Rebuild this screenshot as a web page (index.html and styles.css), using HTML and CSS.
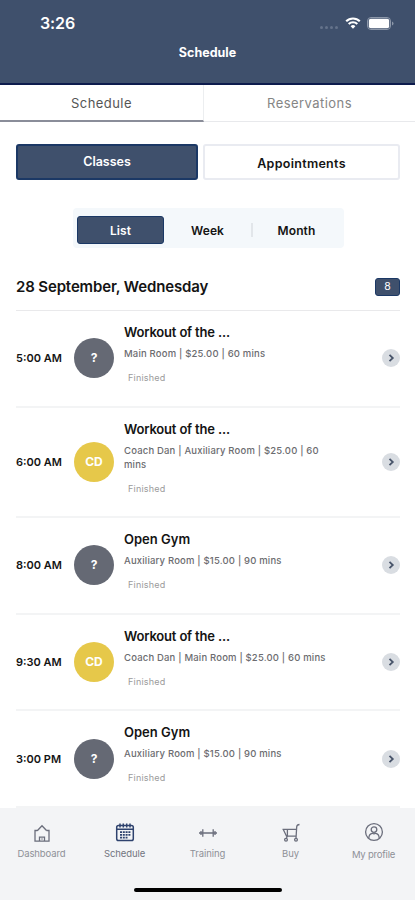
FILE: index.html
```html
<!DOCTYPE html>
<html lang="en">
<head>
<meta charset="utf-8">
<title>Schedule</title>
<link rel="stylesheet" href="styles.css">
</head>
<body>
<div class="app">
  <header class="header">
    <div class="status">
      <span class="clock">3:26</span>
      <div class="signals">
        <span class="dots"><i></i><i></i><i></i><i></i></span>
        <svg class="wifi" viewBox="0 0 16 12"><path d="M1.2 4.3a9.6 9.6 0 0 1 13.6 0M3.7 7a6.1 6.1 0 0 1 8.6 0" fill="none" stroke="#fff" stroke-width="2.1"/><path d="M5.6 9.2a3.4 3.4 0 0 1 4.8 0L8 11.8z" fill="#fff"/></svg>
        <svg class="battery" viewBox="0 0 27 13"><rect x=".5" y=".5" width="23" height="12" rx="3.5" fill="none" stroke="#8c97a9"/><rect x="1.8" y="1.8" width="20.4" height="9.4" rx="2" fill="#fff"/><path d="M25 4.5q1.5.6 1.5 2t-1.5 2z" fill="#8c97a9"/></svg>
      </div>
    </div>
    <h1 class="title">Schedule</h1>
  </header>
  <nav class="tabs">
    <span class="tab tab-on">Schedule</span>
    <span class="tab">Reservations</span>
  </nav>
  <main class="content">
    <div class="kinds">
      <button class="kind kind-on">Classes</button>
      <button class="kind">Appointments</button>
    </div>
    <div class="views">
      <button class="view view-on">List</button>
      <button class="view">Week</button>
      <i class="split"></i>
      <button class="view">Month</button>
    </div>
    <div class="day"><h2>28 September, Wednesday</h2><span class="count">8</span></div>
    <ul class="list">
      <li class="row">
        <span class="time">5:00 AM</span><span class="avatar">?</span>
        <div class="info"><h3>Workout of the ...</h3><p class="meta">Main Room | $25.00 | 60 mins</p><p class="state">Finished</p></div>
        <svg class="go" viewBox="0 0 18 18"><circle cx="9" cy="9" r="9"/><path d="M7.5 5.8 10.8 9l-3.3 3.2"/></svg>
      </li>
      <li class="row row-tall">
        <span class="time">6:00 AM</span><span class="avatar coach">CD</span>
        <div class="info"><h3>Workout of the ...</h3><p class="meta">Coach Dan | Auxiliary Room | $25.00 | 60<br>mins</p><p class="state">Finished</p></div>
        <svg class="go" viewBox="0 0 18 18"><circle cx="9" cy="9" r="9"/><path d="M7.5 5.8 10.8 9l-3.3 3.2"/></svg>
      </li>
      <li class="row">
        <span class="time">8:00 AM</span><span class="avatar">?</span>
        <div class="info"><h3 class="gym">Open Gym</h3><p class="meta">Auxiliary Room | $15.00 | 90 mins</p><p class="state">Finished</p></div>
        <svg class="go" viewBox="0 0 18 18"><circle cx="9" cy="9" r="9"/><path d="M7.5 5.8 10.8 9l-3.3 3.2"/></svg>
      </li>
      <li class="row">
        <span class="time">9:30 AM</span><span class="avatar coach">CD</span>
        <div class="info"><h3>Workout of the ...</h3><p class="meta">Coach Dan | Main Room | $25.00 | 60 mins</p><p class="state">Finished</p></div>
        <svg class="go" viewBox="0 0 18 18"><circle cx="9" cy="9" r="9"/><path d="M7.5 5.8 10.8 9l-3.3 3.2"/></svg>
      </li>
      <li class="row">
        <span class="time">3:00 PM</span><span class="avatar">?</span>
        <div class="info"><h3 class="gym">Open Gym</h3><p class="meta">Auxiliary Room | $15.00 | 90 mins</p><p class="state">Finished</p></div>
        <svg class="go" viewBox="0 0 18 18"><circle cx="9" cy="9" r="9"/><path d="M7.5 5.8 10.8 9l-3.3 3.2"/></svg>
      </li>
    </ul>
  </main>
  <footer class="bottom">
    <nav class="menu">
      <span class="item">
        <svg viewBox="0 0 20 20"><path d="M5.5 7.5 10 2.8l4.5 4.7M5.5 7.5H3v10.7h14V7.5h-2.5M7.5 18v-3.8h5V18M9.5 16h1"/></svg>
        <span>Dashboard</span>
      </span>
      <span class="item item-on">
        <svg viewBox="0 0 20 20"><rect x="1.7" y="2.5" width="16.6" height="15" rx="1.8"/><path d="M5 .5v4M8.3.5v4M11.7.5v4M15 .5v4M2 6.2h16"/><path d="M5 9.2h10.5M5 11.9h10.5M5 14.6h7.5" stroke-width="1.7" stroke-dasharray="2 .8"/></svg>
        <span>Schedule</span>
      </span>
      <span class="item">
        <svg viewBox="0 0 20 20"><path d="M1 10h18M4.8 6.3v7.4M15.2 6.3v7.4M3 8v4M17 8v4"/></svg>
        <span>Training</span>
      </span>
      <span class="item">
        <svg viewBox="0 0 20 20"><path d="M18.5 1.5q-2.6.2-2.8 2.2L15 15.5M1.5 6.3h13.8M2.3 6.5l3.2 6.7h9.5M6.4 6.8v6.4L5.2 15.5"/><circle cx="5" cy="16.8" r="1.4"/><circle cx="15" cy="16.8" r="1.4"/></svg>
        <span>Buy</span>
      </span>
      <span class="item profile">
        <svg viewBox="0 0 20 20"><circle cx="10" cy="10" r="8.4"/><circle cx="10" cy="7.6" r="2.8"/><path d="M4.8 16q.2-4.3 3.6-4.7 1.6 1 3.2 0 3.4.4 3.6 4.7"/></svg>
        <span>My profile</span>
      </span>
    </nav>
    <i class="home"></i>
  </footer>
</div>
</body>
</html>
```
FILE: styles.css
```css
* { box-sizing: border-box; margin: 0; padding: 0; }
body { font-family: Inter, "Liberation Sans", sans-serif; background: #fff; color: #141414; }
button { font: inherit; border: 0; background: none; color: inherit; }
.app { width: 415px; height: 900px; display: flex; flex-direction: column; overflow: hidden; }
.header { height: 85px; flex: none; background: #3f506c; border-bottom: 2px solid #0d1b4d; color: #fff; }
.status { height: 42px; padding: 13px 21px 0 40px; display: flex; justify-content: space-between; }
.clock { font-size: 16px; font-weight: 600; line-height: 21px; letter-spacing: -.1px; }
.signals { display: flex; height: 20px; align-items: center; }
.dots { display: flex; gap: 2px; margin: 8px 7px 0 0; }
.dots i { width: 3px; height: 3px; border-radius: 50%; background: #65738b; }
.wifi { width: 16px; height: 12px; margin-right: 6px; }
.battery { width: 27px; height: 13px; }
.title { font-size: 12.5px; font-weight: 700; line-height: 21px; text-align: center; }
.tabs { display: flex; height: 37px; flex: none; }
.tab { flex: 1; text-align: center; font-size: 13px; line-height: 36px; letter-spacing: .45px; color: #858585; border-bottom: 1px solid #e8e9ec; }
.tab-on { flex: 0 0 204px; color: #555; border-right: 1px solid #eceef0; border-bottom: 2px solid #8a8d99; }
.content { flex: 1; min-height: 0; padding: 22px 15px 0 16px; }
.kinds { display: flex; gap: 5px; height: 36px; }
.kind { flex: 1; border: 2px solid #e9ebf1; border-radius: 3px; font-size: 12.5px; font-weight: 600; letter-spacing: .3px; padding-top: 2px; }
.kind-on { flex: 0 0 182px; background: #3f506c; border-color: #1b3865; color: #fff; padding: 0 0 2px; letter-spacing: 0; }
.views { display: flex; align-items: center; width: 271px; height: 40px; margin: 28px 0 0 57px; padding: 4px 4px 0; background: #f4f8fb; border-radius: 4px; font-size: 12px; font-weight: 600; }
.view { width: 87px; height: 28px; letter-spacing: .1px; }
.view-on { background: #3f506c; border: 1px solid #1b3865; border-radius: 3px; color: #fff; }
.split { width: 2px; height: 14px; background: #e2e6ea; }
.day { display: flex; justify-content: space-between; align-items: center; height: 63px; padding-top: 15px; border-bottom: 1px solid #e9e9eb; }
.day h2 { font-size: 15px; font-weight: 600; letter-spacing: -.14px; }
.count { width: 25px; height: 18px; border-radius: 3px; border: 1px solid #1b3865; background: #3f506c; color: #fff; font-size: 10.5px; line-height: 16px; text-align: center; }
.list { list-style: none; }
.row { display: flex; align-items: center; height: 96.6px; border-bottom: 2px solid #f3f4f5; }
.row-tall { height: 110.6px; }
.time { width: 58px; font-size: 11px; font-weight: 600; white-space: nowrap; }
.avatar { width: 40px; height: 40px; flex: none; border-radius: 50%; background: #656974; color: #fff; font-size: 12px; font-weight: 700; line-height: 40px; text-align: center; }
.coach { background: #e6c84a; }
.info { flex: 1; margin-left: 10px; white-space: nowrap; align-self: flex-start; padding-top: 12px; }
.info h3 { font-size: 13px; font-weight: 600; line-height: 18px; letter-spacing: -.17px; }
.info .gym { letter-spacing: 0; }
.meta { font-size: 9.5px; font-weight: 500; line-height: 14px; margin-top: 6px; color: #6c6c70; letter-spacing: .18px; }
.state { font-size: 9px; line-height: 14px; margin: 10px 0 0 4px; color: #9b9b9b; letter-spacing: .2px; }
.go { width: 18px; height: 18px; flex: none; fill: #d9dde2; }
.go path { fill: none; stroke: #48546a; stroke-width: 1.8; }
.bottom { height: 92px; flex: none; background: #f3f4f6; display: flex; flex-direction: column; align-items: center; }
.menu { width: 415px; height: 80px; display: flex; }
.item { width: 83px; padding-top: 15px; display: flex; flex-direction: column; align-items: center; gap: 4px; font-size: 9.5px; line-height: 14px; color: #8e9096; letter-spacing: -.1px; }
.item svg { width: 20px; height: 20px; fill: none; stroke: #6b6e7c; stroke-width: 1.3; }
.item-on { color: #72757f; }
.item.item-on svg { stroke: #2e426e; stroke-width: 1.5; }
.profile { gap: 6px; padding-top: 14px; letter-spacing: -.2px; }
.home { width: 148px; height: 4px; border-radius: 2px; background: #000; }
```
